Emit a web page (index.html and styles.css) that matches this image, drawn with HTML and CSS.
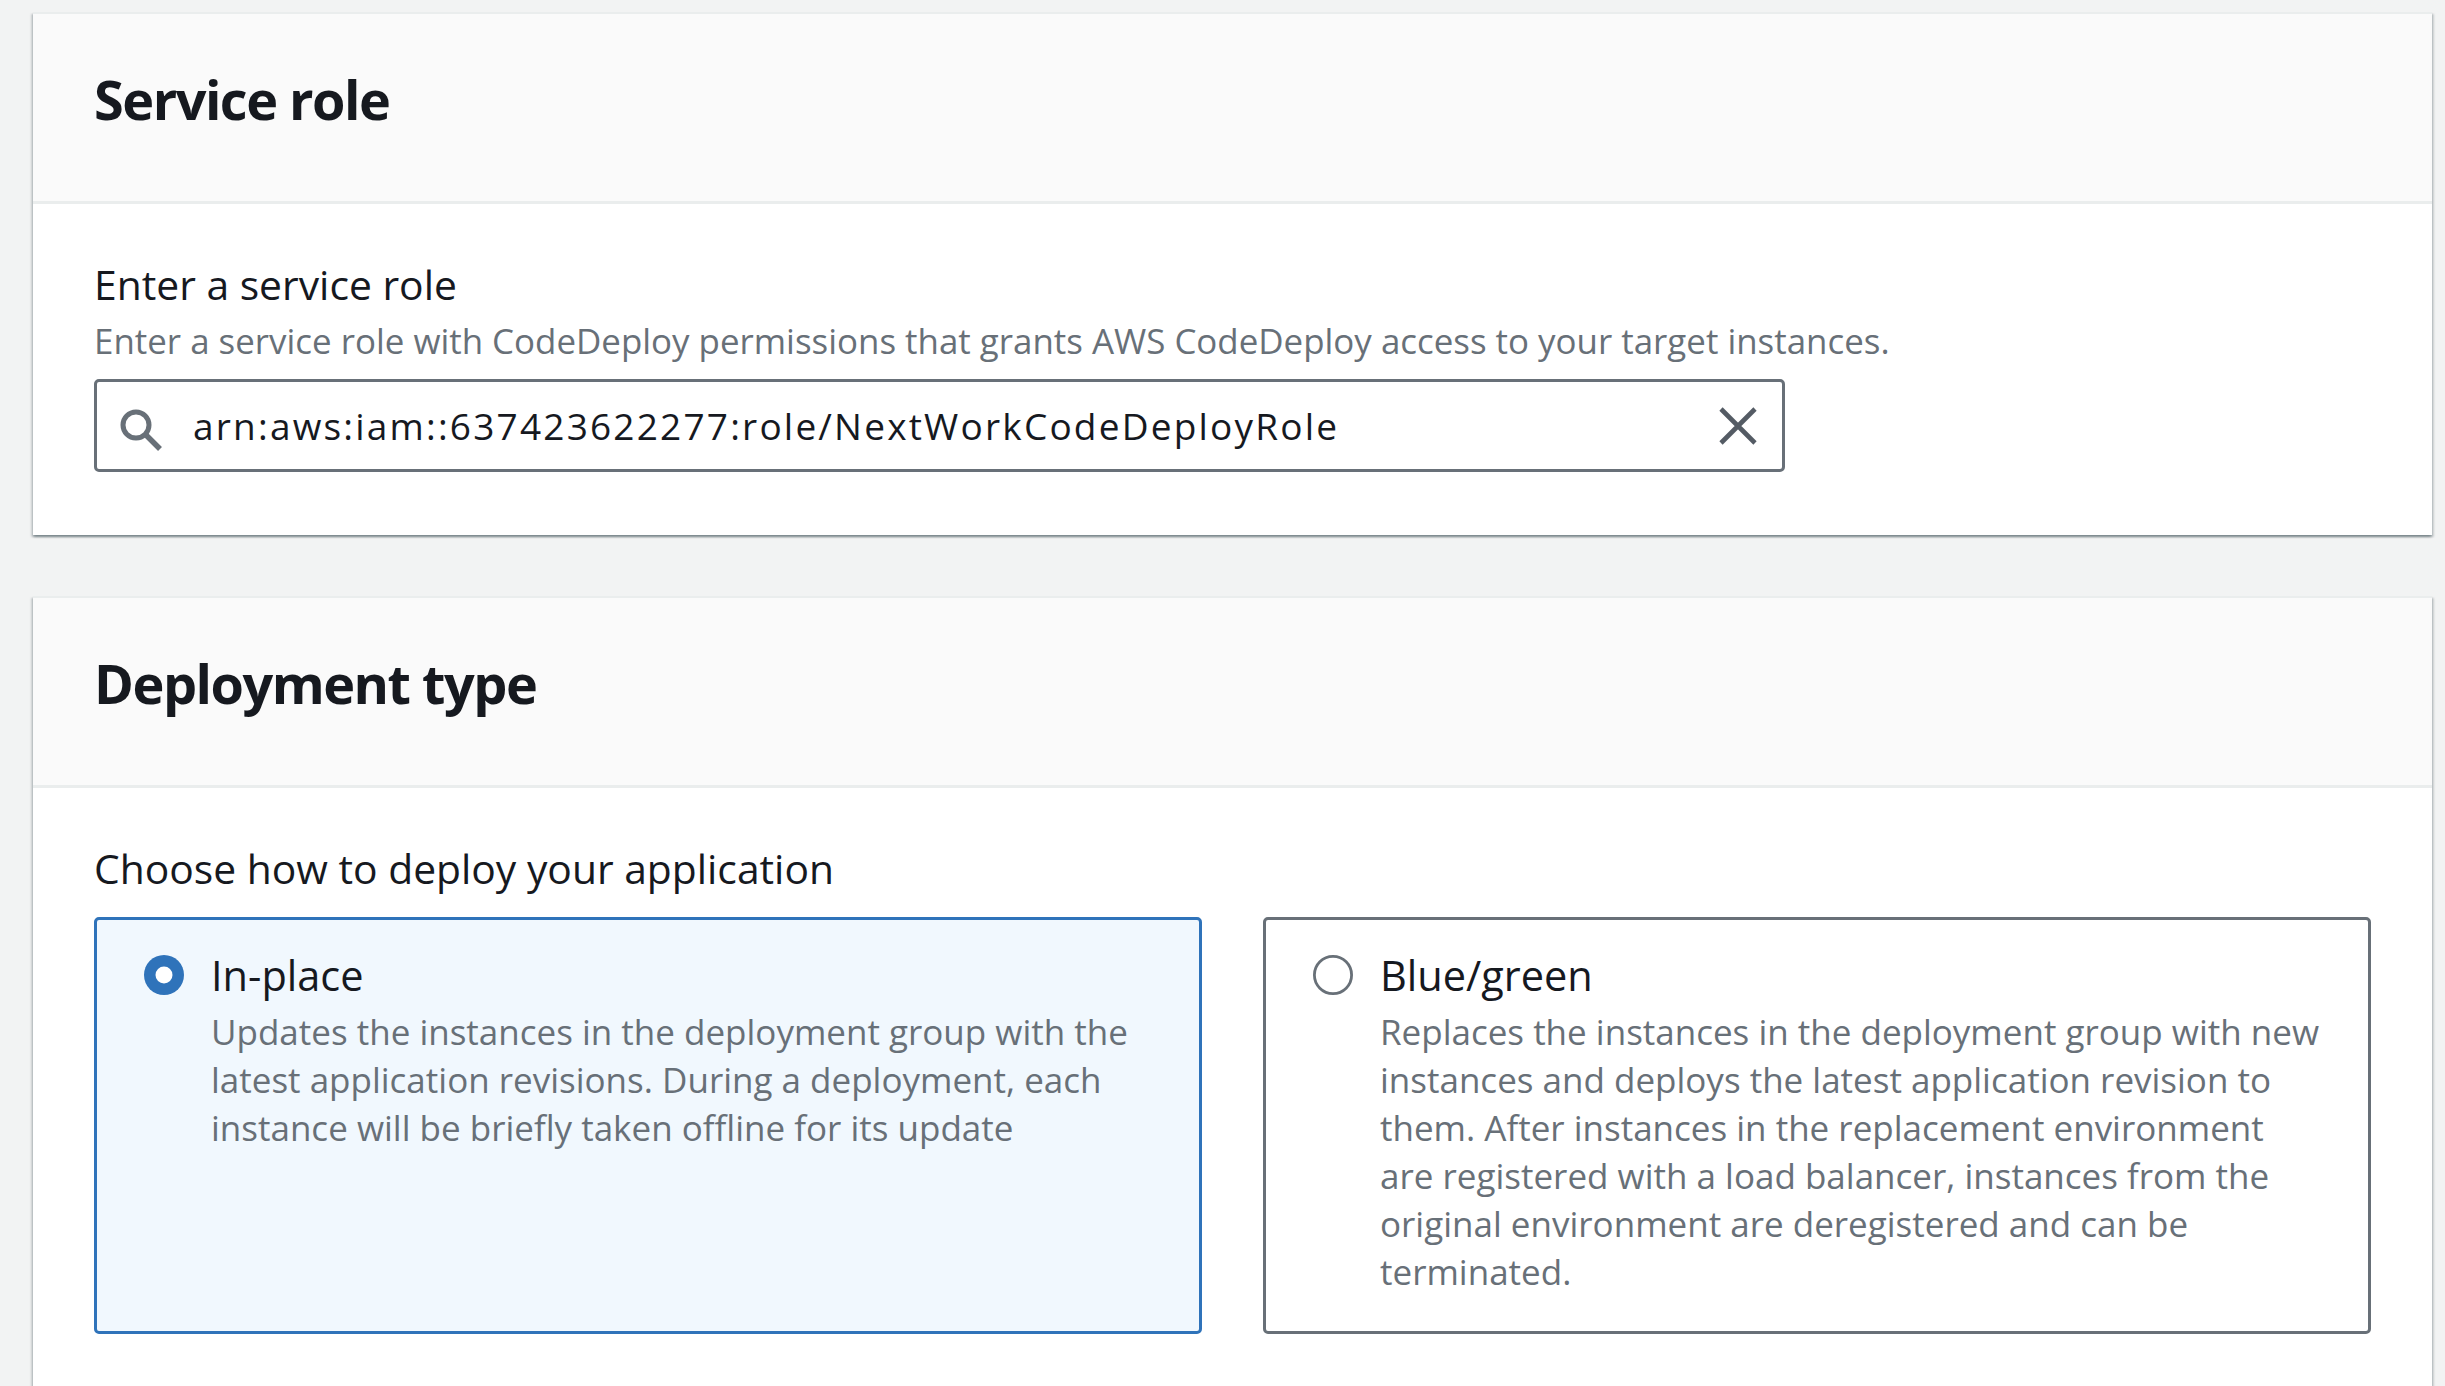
FILE: index.html
```html
<!DOCTYPE html>
<html lang="en">
<head>
<meta charset="utf-8">
<title>CodeDeploy - Deployment group</title>
<link rel="stylesheet" href="styles.css">
</head>
<body>
<div class="page">
  <section class="card">
    <header class="card-header"><h2 class="card-title">Service role</h2></header>
    <div class="card-body">
      <div class="field-label">Enter a service role</div>
      <div class="field-desc">Enter a service role with CodeDeploy permissions that grants AWS CodeDeploy access to your target instances.</div>
      <div class="search-input">
        <svg class="search-icon" width="52" height="52" viewBox="0 0 52 52" aria-hidden="true">
          <circle cx="25" cy="25" r="13" fill="none" stroke="#687078" stroke-width="5"/>
          <path d="M34.5 34.5 L49 49" stroke="#687078" stroke-width="5.5" fill="none"/>
        </svg>
        <span class="input-text">arn:aws:iam::637423622277:role/NextWorkCodeDeployRole</span>
        <svg class="clear-icon" width="40" height="40" viewBox="0 0 40 40" aria-hidden="true">
          <path d="M3 3 L37 37 M37 3 L3 37" stroke="#545b64" stroke-width="4.6" fill="none"/>
        </svg>
      </div>
    </div>
  </section>

  <section class="card">
    <header class="card-header"><h2 class="card-title">Deployment type</h2></header>
    <div class="card-body card-body-tiles">
      <div class="field-label">Choose how to deploy your application</div>
      <div class="tiles">
        <div class="tile tile-selected">
          <svg class="radio" width="40" height="40" viewBox="0 0 40 40" aria-hidden="true">
            <circle cx="20" cy="20" r="20" fill="#2f73ba"/>
            <circle cx="20" cy="20" r="8.5" fill="#ffffff"/>
          </svg>
          <div class="tile-content">
            <div class="tile-label">In-place</div>
            <div class="tile-desc">Updates the instances in the deployment group with the<br>latest application revisions. During a deployment, each<br>instance will be briefly taken offline for its update</div>
          </div>
        </div>
        <div class="tile">
          <svg class="radio" width="40" height="40" viewBox="0 0 40 40" aria-hidden="true">
            <circle cx="20" cy="20" r="18.6" fill="#ffffff" stroke="#687078" stroke-width="2.8"/>
          </svg>
          <div class="tile-content">
            <div class="tile-label">Blue/green</div>
            <div class="tile-desc">Replaces the instances in the deployment group with new<br>instances and deploys the latest application revision to<br>them. After instances in the replacement environment<br>are registered with a load balancer, instances from the<br>original environment are deregistered and can be<br>terminated.</div>
          </div>
        </div>
      </div>
    </div>
  </section>
</div>
</body>
</html>
```

FILE: styles.css
```css
html, body {
  margin: 0;
  padding: 0;
  overflow: hidden;
  background: #f2f3f3;
}

body {
  font-family: "Open Sans", "Noto Sans", "Liberation Sans", sans-serif;
  color: #16191f;
}

.page {
  display: flex;
  flex-direction: column;
  gap: 61px;
  padding: 12px 13px 0 33px;
}

.card {
  background: #ffffff;
  border-top: 2px solid #eaeded;
  box-shadow: 0 2px 2px 0 rgba(0, 28, 36, 0.3),
              2px 2px 2px 0 rgba(0, 28, 36, 0.15),
              -2px 2px 2px 0 rgba(0, 28, 36, 0.15);
}

.card-header {
  background: #fafafa;
  padding: 53px 61px 70px;
  border-bottom: 3px solid #eaeded;
}

.card-title {
  margin: 0;
  font-size: 54px;
  line-height: 64px;
  font-weight: 700;
  letter-spacing: -1.5px;
  color: #16191f;
}

.card-body {
  padding: 56px 61px 63px;
}

.field-label {
  font-size: 40.8px;
  line-height: 48px;
  color: #16191f;
}

.field-desc {
  margin-top: 9px;
  font-size: 34.9px;
  line-height: 48px;
  color: #687078;
  white-space: nowrap;
}

.search-input {
  margin-top: 14px;
  width: 1691px;
  height: 93px;
  box-sizing: border-box;
  border: 3px solid #687078;
  border-radius: 5px;
  background: #ffffff;
  display: flex;
  align-items: center;
  padding: 0 24px 0 14px;
}

.search-icon {
  flex: none;
  display: block;
  margin-top: 0;
}

.input-text {
  flex: 1;
  margin-left: 30px;
  font-size: 37px;
  line-height: 48px;
  letter-spacing: 2.2px;
  color: #16191f;
  white-space: nowrap;
}

.clear-icon {
  flex: none;
  display: block;
}

.tiles {
  margin-top: 25px;
  display: grid;
  grid-template-columns: 1fr 1fr;
  gap: 61px;
}

.tile {
  display: flex;
  align-items: flex-start;
  gap: 27px;
  border: 3px solid #687078;
  border-radius: 5px;
  padding: 27px 40px 35px 47px;
  background: #ffffff;
}

.tile-selected {
  border-color: #2f73ba;
  background: #f1f8fe;
}

.radio {
  flex: none;
  display: block;
  margin-top: 8px;
}

.tile-content {
  flex: 1;
  min-width: 0;
}

.tile-label {
  font-size: 41.5px;
  line-height: 56px;
  color: #16191f;
}

.tile-desc {
  margin-top: 5px;
  font-size: 35px;
  line-height: 48px;
  color: #687078;
  white-space: nowrap;
}
```
